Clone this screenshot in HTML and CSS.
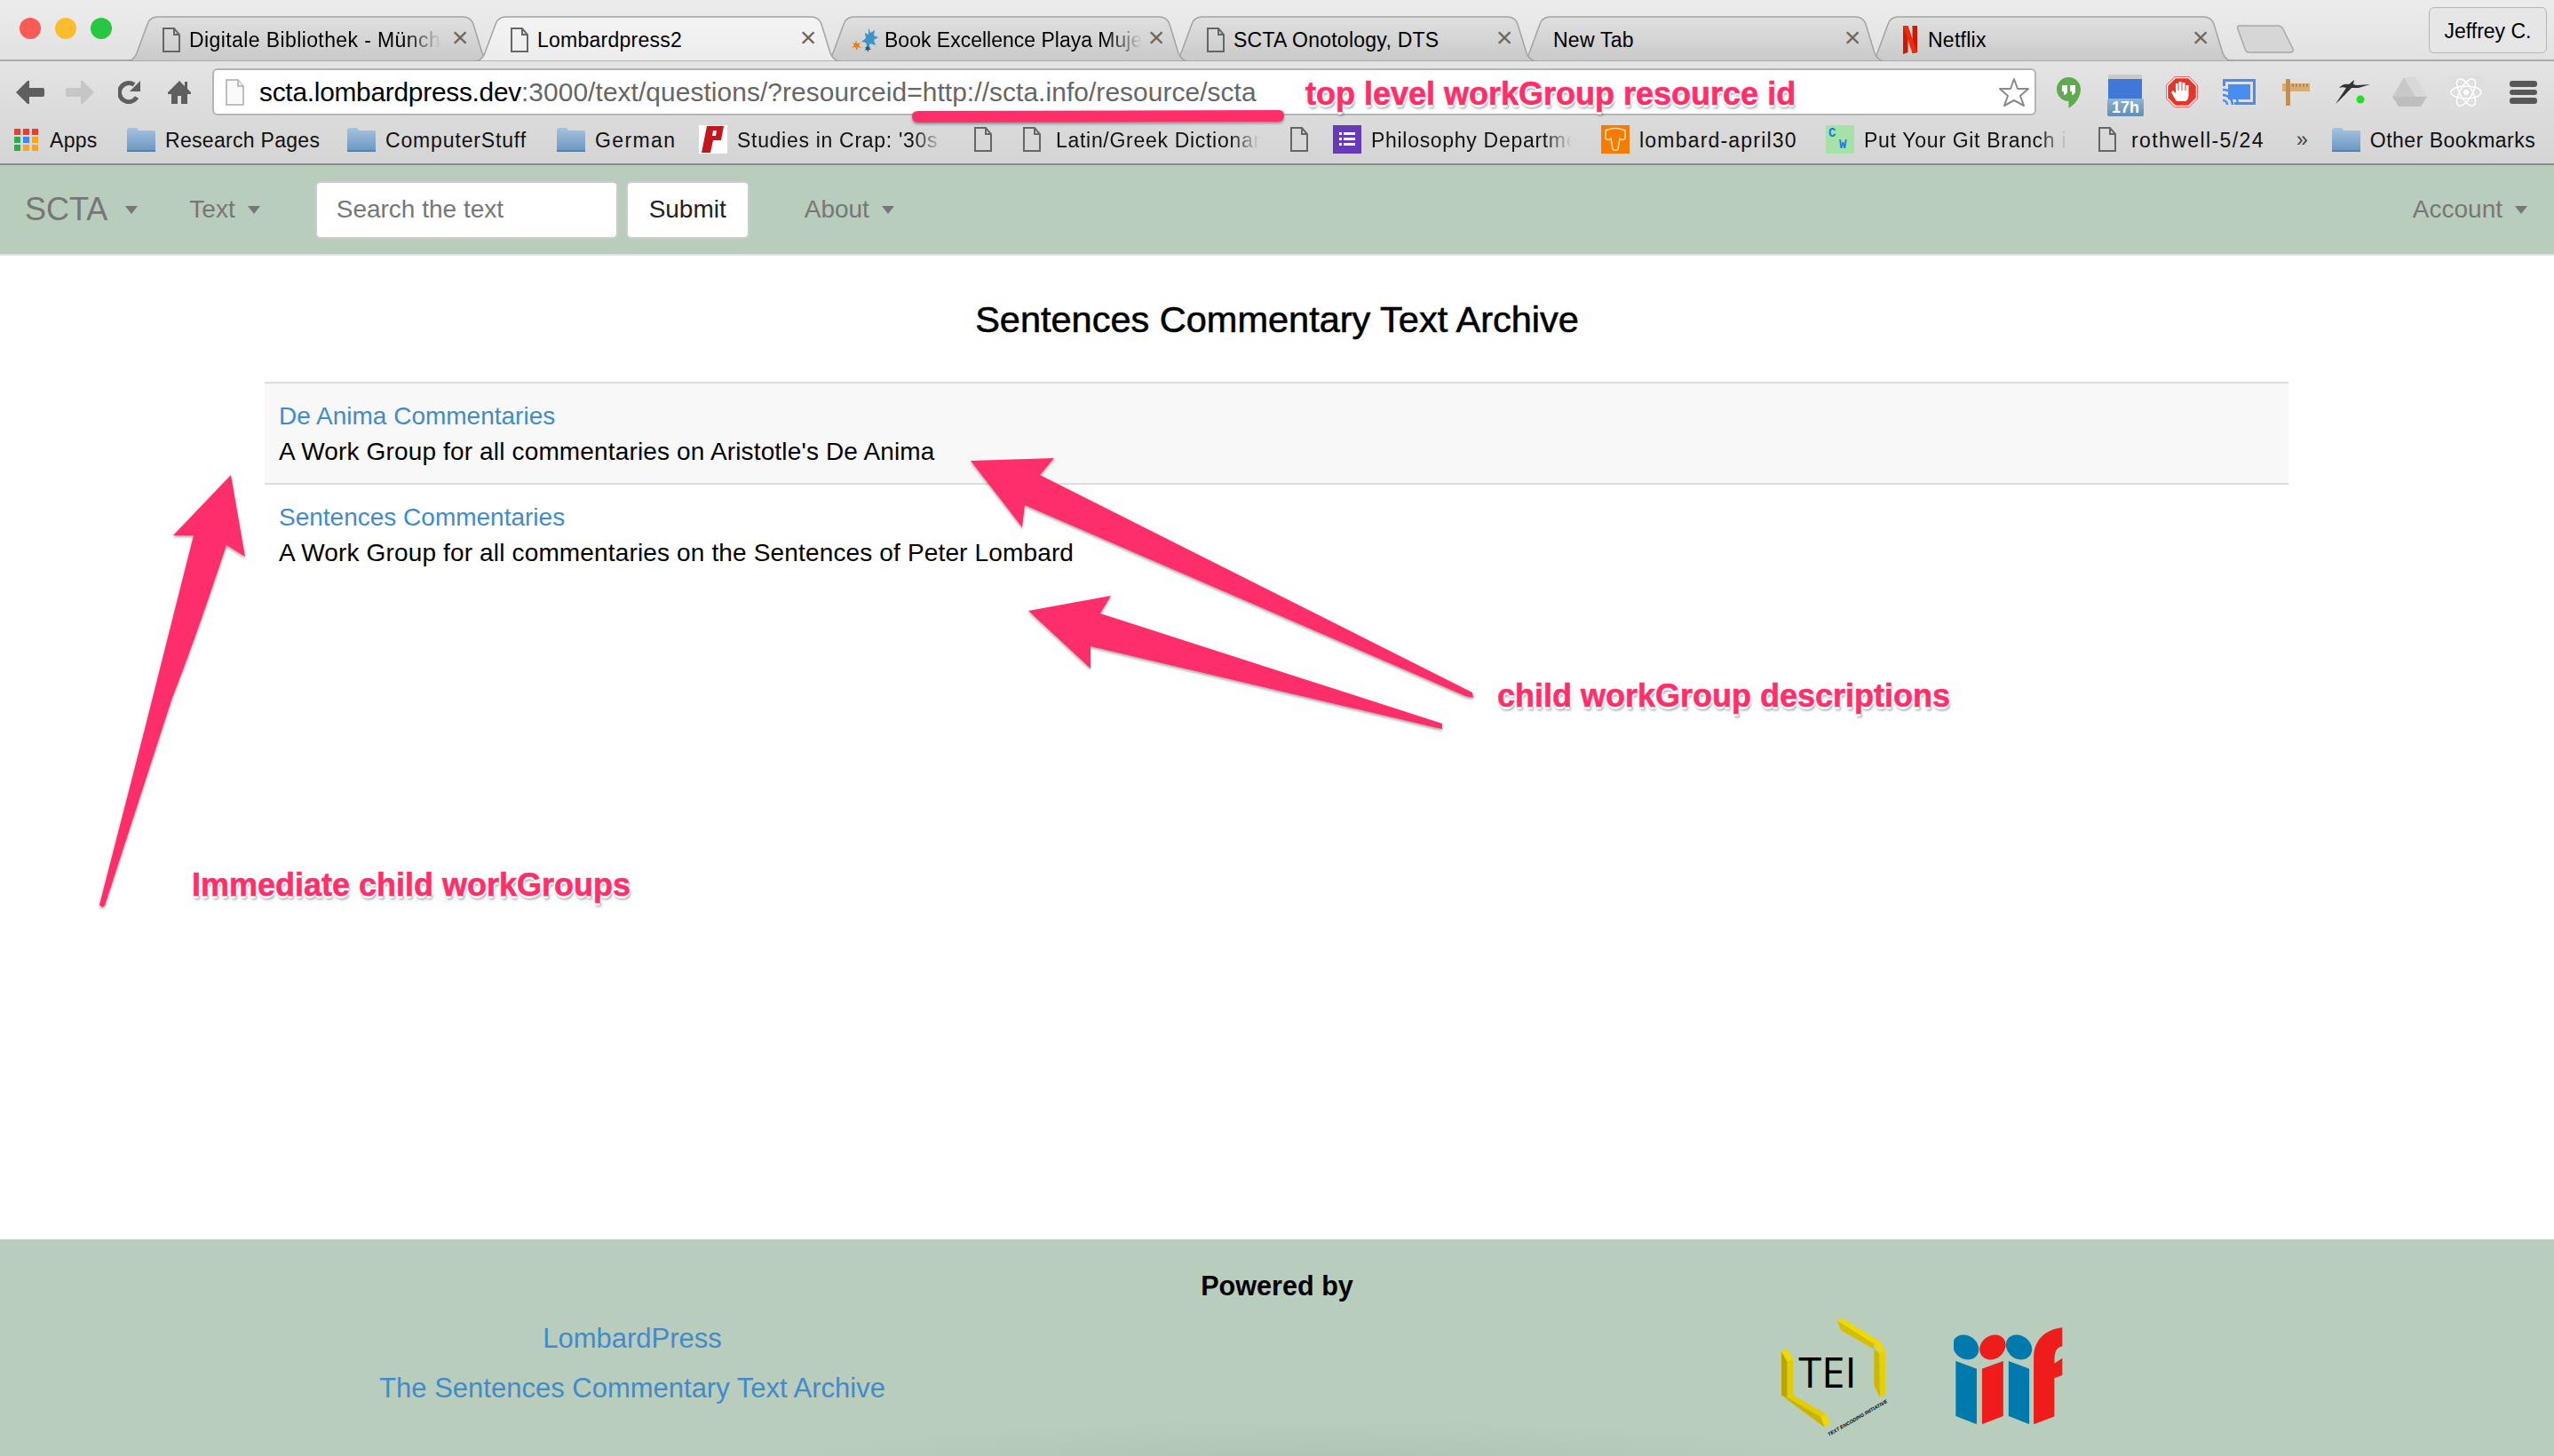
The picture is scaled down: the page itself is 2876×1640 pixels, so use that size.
FILE: index.html
```html
<!DOCTYPE html>
<html lang="en">
<head>
<meta charset="utf-8">
<title>Lombardpress2</title>
<link rel="stylesheet" href="styles.css">
</head>
<body>
<svg class="sprite" width="0" height="0" aria-hidden="true">
  <defs>
    <linearGradient id="gTab" x1="0" y1="0" x2="0" y2="1"><stop offset="0" stop-color="#e0e0e0"/><stop offset="1" stop-color="#c9c9c9"/></linearGradient>
    <linearGradient id="gTabOn" x1="0" y1="0" x2="0" y2="1"><stop offset="0" stop-color="#f4f4f4"/><stop offset="1" stop-color="#ececec"/></linearGradient>
    <linearGradient id="gFolder" x1="0" y1="0" x2="0" y2="1"><stop offset="0" stop-color="#a5c3de"/><stop offset="1" stop-color="#6c97c2"/></linearGradient>
    <linearGradient id="gBadge" x1="0" y1="0" x2="0" y2="1"><stop offset="0" stop-color="#8db4d2"/><stop offset="1" stop-color="#5f8fb5"/></linearGradient>
    <symbol id="tabshape" viewBox="0 0 412 50" preserveAspectRatio="none">
      <path d="M0 50C6 50 9 46 11 41L23 9C25 3 29 1 35 1H378C384 1 388 3 390 9L400 41C402 46 406 50 412 50Z"/>
    </symbol>
    <symbol id="page" viewBox="0 0 20 28">
      <path d="M1 1H13L19 8V27H1Z M13 1V8H19" fill="none" stroke="#666" stroke-width="2"/>
    </symbol>
    <symbol id="folder" viewBox="0 0 32 28">
      <path d="M0 4Q0 1 3 1H10Q12 1 13 4H30Q32 4 32 6V27H0Z" fill="url(#gFolder)"/>
      <path d="M0 26H32V28H0Z" fill="#5f7f9f"/>
    </symbol>
  </defs>
</svg>

<header class="chrome">
  <div class="tabstrip">
    <div class="traffic"><i class="dot dot-red"></i><i class="dot dot-amber"></i><i class="dot dot-green"></i></div>
    <div class="tabs">
      <div class="tab">
        <svg class="tab-bg" fill="url(#gTab)"><use href="#tabshape"/></svg>
        <svg class="fav fav-page"><use href="#page"/></svg>
        <span class="tab-title tab-fade">Digitale Bibliothek - Münch</span>
        <span class="tab-x">×</span>
      </div>
      <div class="tab tab-active">
        <svg class="tab-bg" fill="url(#gTabOn)"><use href="#tabshape"/></svg>
        <svg class="fav fav-page"><use href="#page"/></svg>
        <span class="tab-title">Lombardpress2</span>
        <span class="tab-x">×</span>
      </div>
      <div class="tab">
        <svg class="tab-bg" fill="url(#gTab)"><use href="#tabshape"/></svg>
        <svg class="fav fav-star" viewBox="0 0 30 28">
          <path d="M19 0l2 6 5-3-1 6 5 2-5 3 2 6-6-2-3 6-2-7-5-1 5-4-1-6 4 2z" fill="#3f93c6"/>
          <path d="M5 14l1 4 4-1-2 3 3 3-4-1-1 4-2-4-4 1 3-3-2-3 3 1z" fill="#ea7d1c"/>
          <path d="M18 20l1 2 2-1-1 2 2 2-3 0 0 3-2-3-2 1 1-3-1-1 2 0z" fill="#1d5c8c"/>
        </svg>
        <span class="tab-title tab-fade tab-tight">Book Excellence Playa Muje</span>
        <span class="tab-x">×</span>
      </div>
      <div class="tab">
        <svg class="tab-bg" fill="url(#gTab)"><use href="#tabshape"/></svg>
        <svg class="fav fav-page"><use href="#page"/></svg>
        <span class="tab-title">SCTA Onotology, DTS</span>
        <span class="tab-x">×</span>
      </div>
      <div class="tab tab-plain">
        <svg class="tab-bg" fill="url(#gTab)"><use href="#tabshape"/></svg>
        <span class="tab-title">New Tab</span>
        <span class="tab-x">×</span>
      </div>
      <div class="tab">
        <svg class="tab-bg" fill="url(#gTab)"><use href="#tabshape"/></svg>
        <svg class="fav fav-netflix" viewBox="0 0 16 32">
          <path d="M0 0H5.500V30L0 32ZM10.500 0H16V30L10.500 31Z" fill="#c91c08"/>
          <path d="M0 0H5.500L16 30 10.500 31Z" fill="#ee2a0e"/>
        </svg>
        <span class="tab-title">Netflix</span>
        <span class="tab-x">×</span>
      </div>
    </div>
    <svg class="newtab" viewBox="0 0 64 32"><path d="M2 1H46Q50 1 52 5L63 27Q64 31 60 31H14Q10 31 9 27L1 5Q0 1 2 1Z" fill="#d6d6d6" stroke="#a8a8a8" stroke-width="1.5"/></svg>
    <div class="profile">Jeffrey C.</div>
  </div>

  <div class="toolbar">
    <span class="navbtn"><svg class="nav-ic" viewBox="0 0 32 26"><path d="M0 13L13 0H15V8H30Q32 8 32 10V16Q32 18 30 18H15V26H13Z" fill="#5f5f5f"/></svg></span>
    <span class="navbtn"><svg class="nav-ic" viewBox="0 0 32 26"><path d="M32 13L19 0H17V8H2Q0 8 0 10V16Q0 18 2 18H17V26H19Z" fill="#c6c6c6"/></svg></span>
    <span class="navbtn"><svg class="nav-ic nav-ic-sq" viewBox="0 0 26 26"><path d="M21 18.5A10.5 10.5 0 1 1 18 4.5" fill="none" stroke="#5f5f5f" stroke-width="5"/><path d="M25 0V12H13Z" fill="#5f5f5f"/></svg></span>
    <span class="navbtn"><svg class="nav-ic nav-ic-sq" viewBox="0 0 26 26"><path d="M13 0L19 6V1H22V9L26 13V15H22V26H15V17H11V26H4V15H0V13Z" fill="#5f5f5f"/></svg></span>

    <div class="omnibox">
      <svg class="omni-page" viewBox="0 0 21 30"><path d="M1 1H14L20 8V29H1Z" fill="#fafafa" stroke="#aaa" stroke-width="1.5"/><path d="M14 1V8H20" fill="#eee" stroke="#aaa" stroke-width="1.5"/></svg>
      <span class="url"><b class="url-host">scta.lombardpress.dev</b>:3000/text/questions/?resourceid=http://scta.info/resource/scta</span>
      <svg class="star" viewBox="0 0 36 34"><path d="M18 2L22 13 34 13 25 21 29 32 18 26 7 32 11 21 2 13 14 13Z" fill="#fff" stroke="#8a8a8a" stroke-width="2" stroke-linejoin="round"/></svg>
    </div>

    <div class="extensions">
      <span class="ext"><svg class="e-hang" viewBox="0 0 27 35"><path d="M13.5 0C6 0 0 6 0 13.5S6 27 13.5 27V35C20 31 27 23 27 13.5 27 6 21 0 13.5 0Z" fill="#5fa94e"/><path d="M6 9H12V16Q12 19 8 20V16H6ZM15 9H21V16Q21 19 17 20V16H15Z" fill="#fff"/></svg></span>
      <span class="ext"><svg class="e-cal" viewBox="0 0 41 47"><rect x="1" y="0" width="38" height="6" fill="#c9c9c9"/><rect x="1" y="5" width="38" height="22" fill="#3f78d6"/><rect x="0" y="27" width="41" height="20" rx="2" fill="url(#gBadge)"/><text class="e-cal-t" x="20.5" y="43" text-anchor="middle">17h</text></svg></span>
      <span class="ext"><svg class="e-stop" viewBox="0 0 36 35"><path d="M10 0H26L36 10V25L26 35H10L0 25V10Z" fill="#e5352b"/><path d="M10.500 1.500H25.500L34.500 10.500V24.500L25.500 33.500H10.500L1.500 24.500V10.500Z" fill="none" stroke="#fff" stroke-width="1.500"/><path d="M12 28Q8 22 6 18L8 16 11 19V8H13.500V16H14.500V6H17.500V16H18.500V7H21.500V16H22.500V10H25.500V22Q25 27 22 28Z" fill="#fff"/></svg></span>
      <span class="ext"><svg class="e-cast" viewBox="0 0 37 29"><path d="M0 0H37V29H13V26H34V3H3V8H0Z" fill="#4a8df2"/><rect x="6" y="6" width="25" height="17" fill="#4a8df2"/><path d="M0 12A17 17 0 0 1 17 29M0 18A11 11 0 0 1 11 29M0 24A5 5 0 0 1 5 29" fill="none" stroke="#4a8df2" stroke-width="2.500"/></svg></span>
      <span class="ext"><svg class="e-ruler" viewBox="0 0 31 30"><rect x="0" y="5" width="31" height="9" fill="#d8ae73"/><rect x="4" y="0" width="5" height="30" fill="#c08f55"/><path d="M12 5V9M16 5V9M20 5V9M24 5V9M28 5V9" stroke="#8f6a3a" stroke-width="1"/></svg></span>
      <span class="ext"><svg class="e-dash" viewBox="0 0 39 27"><path d="M0 27L12 9C9 8 7 8 4 9 7 5 11 4 15 5L21 0 20 5 24 6 39 5 26 9 18 9C13 14 9 19 0 27Z" fill="#333"/><circle cx="28" cy="22" r="4.500" fill="#22e022"/></svg></span>
      <span class="ext"><svg class="e-drive" viewBox="0 0 39 33"><path d="M13 0H26L39 22H26Z" fill="#d8d8d8"/><path d="M13 0L26 22 19 33 0 22Z" fill="#c8c8c8"/><path d="M0 22H39L32 33H7Z" fill="#bebebe"/></svg></span>
      <span class="ext"><svg class="e-react" viewBox="0 0 38 38"><rect width="38" height="38" fill="#dedede"/><g fill="none" stroke="#fff" stroke-width="1.500"><ellipse cx="19" cy="19" rx="17" ry="7"/><ellipse cx="19" cy="19" rx="17" ry="7" transform="rotate(60 19 19)"/><ellipse cx="19" cy="19" rx="17" ry="7" transform="rotate(120 19 19)"/></g><circle cx="19" cy="19" r="3" fill="#fff"/></svg></span>
      <span class="ext"><svg class="e-menu" viewBox="0 0 31 26"><rect width="31" height="7" rx="3" fill="#585858"/><rect y="10" width="31" height="6" rx="3" fill="#585858"/><rect y="19" width="31" height="7" rx="3" fill="#585858"/></svg></span>
    </div>
  </div>

  <nav class="bookmarks">
    <a class="bm"><svg class="bm-apps" viewBox="0 0 27 25"><g fill="#ee3b30"><rect width="7" height="7"/><rect x="10" width="7" height="7"/><rect x="20" width="7" height="7"/></g><rect y="9" width="7" height="7" fill="#34a853"/><rect x="10" y="9" width="7" height="7" fill="#4285f4"/><rect x="20" y="9" width="7" height="7" fill="#f5a623"/><rect y="18" width="7" height="7" fill="#34a853"/><rect x="10" y="18" width="7" height="7" fill="#f5a623"/><rect x="20" y="18" width="7" height="7" fill="#f5a623"/></svg><span class="bt bt-apps">Apps</span></a>
    <a class="bm"><svg class="bm-folder"><use href="#folder"/></svg><span class="bt bt-research">Research Pages</span></a>
    <a class="bm"><svg class="bm-folder"><use href="#folder"/></svg><span class="bt bt-computer">ComputerStuff</span></a>
    <a class="bm"><svg class="bm-folder"><use href="#folder"/></svg><span class="bt bt-german">German</span></a>
    <a class="bm"><svg class="bm-square" viewBox="0 0 32 32"><rect width="32" height="32" fill="#fff"/><path d="M9 1H28L25 17H16L13 31H3Z" fill="#c4161c"/><path d="M16 6H20L19 12H15Z" fill="#fff"/></svg><span class="bt fade bt-studies">Studies in Crap: '30s</span></a>
    <a class="bm bm-only"><svg class="bm-page"><use href="#page"/></svg></a>
    <a class="bm"><svg class="bm-page bm-page-text"><use href="#page"/></svg><span class="bt fade bt-latin">Latin/Greek Dictionar</span></a>
    <a class="bm bm-only"><svg class="bm-page"><use href="#page"/></svg></a>
    <a class="bm bm-forms"><svg class="bm-square" viewBox="0 0 32 32"><rect width="32" height="32" fill="#673ab7"/><path d="M7 8H10V11H7ZM12 8H25V11H12ZM7 14H10V17H7ZM12 14H25V17H12ZM7 20H10V23H7ZM12 20H25V23H12Z" fill="#fff"/></svg><span class="bt fade bt-phil">Philosophy Departme</span></a>
    <a class="bm"><svg class="bm-square" viewBox="0 0 32 32"><rect width="32" height="32" fill="#f57c00"/><path d="M5 6Q16 1 27 6V15Q24 18 21 15L19 27Q16 30 13 27L11 15Q8 18 5 15Z" fill="none" stroke="#ffe3bd" stroke-width="1.500"/></svg><span class="bt bt-lombard">lombard-april30</span></a>
    <a class="bm"><svg class="bm-square" viewBox="0 0 32 32"><rect width="32" height="32" fill="#a4e2a8"/><text class="cw-c" x="3" y="13">C</text><text class="cw-w" x="15" y="26">W</text></svg><span class="bt fade bt-git">Put Your Git Branch i</span></a>
    <a class="bm"><svg class="bm-page bm-page-text"><use href="#page"/></svg><span class="bt bt-rothwell">rothwell-5/24</span></a>
    <span class="bm-more">»</span>
    <a class="bm bm-other"><svg class="bm-folder"><use href="#folder"/></svg><span class="bt bt-other">Other Bookmarks</span></a>
  </nav>
</header>

<nav class="navbar">
  <a class="brand">SCTA<i class="caret"></i></a>
  <a class="nav-link nav-text">Text<i class="caret"></i></a>
  <form class="search">
    <input class="search-input" type="text" placeholder="Search the text">
    <button class="search-btn" type="button">Submit</button>
  </form>
  <a class="nav-link nav-about">About<i class="caret"></i></a>
  <a class="nav-link nav-account">Account<i class="caret"></i></a>
</nav>

<main class="content">
  <h1 class="page-title">Sentences Commentary Text Archive</h1>
  <ul class="groups">
    <li class="group group-odd">
      <a class="link">De Anima Commentaries</a>
      <p class="desc">A Work Group for all commentaries on Aristotle's De Anima</p>
    </li>
    <li class="group">
      <a class="link">Sentences Commentaries</a>
      <p class="desc">A Work Group for all commentaries on the Sentences of Peter Lombard</p>
    </li>
  </ul>
</main>

<footer class="footer">
  <h2 class="powered">Powered by</h2>
  <div class="footer-grid">
    <div class="footer-links">
      <a class="link">LombardPress</a>
      <a class="link">The Sentences Commentary Text Archive</a>
    </div>
    <div class="footer-logos">
      <svg class="logo-tei" viewBox="318 135 382 420">
        <path d="M507 145L522 136 652 216 670 248 650 255 632 224Z" fill="#efd900"/>
        <path d="M507 145L632 224 632 242 520 178Z" fill="#d5bd00"/>
        <path d="M632 242L650 255 652 405 632 365Z" fill="#cdb700"/>
        <path d="M650 255L670 248 670 395 652 405Z" fill="#e6d000"/>
        <path d="M318 250L335 238 357 275 338 285Z" fill="#efd900"/>
        <path d="M318 250L338 285 338 405 318 398Z" fill="#b9a600"/>
        <path d="M338 285L357 275 357 397 338 405Z" fill="#e3cd00"/>
        <path d="M338 405L357 397 470 462 452 472Z" fill="#e3cd00"/>
        <path d="M318 398L338 405 452 472 465 507Z" fill="#c9b400"/>
        <path d="M452 472L470 462 483 492 465 507Z" fill="#efd900"/>
        <text class="tei-word" x="376" y="372">TEI</text>
        <text class="tei-sub" transform="translate(479 537) rotate(-30)">TEXT ENCODING INITIATIVE</text>
      </svg>
      <svg class="logo-iiif" viewBox="900 168 370 330">
        <ellipse cx="941" cy="235" rx="47" ry="39" transform="rotate(38 941 235)" fill="#0079ad"/>
        <ellipse cx="1032" cy="235" rx="47" ry="39" transform="rotate(-38 1032 235)" fill="#ef1c1c"/>
        <ellipse cx="1121" cy="235" rx="47" ry="39" transform="rotate(38 1121 235)" fill="#0079ad"/>
        <path d="M907 282L978 308V496L907 468ZM1086 282L1156 308V496L1086 468Z" fill="#0079ad"/>
        <path d="M996 308L1068 282V468L996 496Z" fill="#ef1c1c"/>
        <path d="M1171 496V270C1171 210 1210 175 1268 168V232C1248 235 1241 248 1241 290L1268 272V330L1241 340V470Z" fill="#ef1c1c"/>
      </svg>
    </div>
  </div>
</footer>

<div class="annotations">
  <svg class="anno-art" viewBox="0 0 2876 1640">
    <defs><filter id="arrowShadow" x="-10%" y="-10%" width="120%" height="120%"><feDropShadow dx="0" dy="2" stdDeviation="1.500" flood-color="#000" flood-opacity=".35"/></filter></defs>
    <g fill="#fe2f6b" filter="url(#arrowShadow)">
      <path d="M1027 131Q1027 125 1034 125L1440 124Q1446 124 1446 130 1446 137 1440 137L1034 138Q1027 138 1027 131Z"/>
      <path d="M1093 519L1187 516 1171 535 1658 780 1659 786 1650 784 1154 569 1151 594Z"/>
      <path d="M1158 688L1251 671 1239 691 1624 815 1624 821 1614 819 1228 728 1228 753Z"/>
      <path d="M260 535L276 627 255 614Q220 720 194 786L118 1020Q115 1024 112 1019L163 821 218 603 195 603Z"/>
    </g>
  </svg>
  <span class="anno anno-top">top level workGroup resource id</span>
  <span class="anno anno-desc">child workGroup descriptions</span>
  <span class="anno anno-child">Immediate child workGroups</span>
</div>
</body>
</html>
```
FILE: styles.css
```css
* { box-sizing: border-box; }
html, body { margin: 0; padding: 0; }
body {
  position: relative;
  width: 2876px;
  height: 1640px;
  display: flex;
  flex-direction: column;
  overflow: hidden;
  background: #fff;
  color: #000;
  font-family: "Liberation Sans", Arial, sans-serif;
  font-size: 28px;
  line-height: 40px;
}
.sprite { display: block; height: 0; width: 0; }

/* browser chrome */
.chrome { flex: none; height: 186px; border-bottom: 2px solid #8b8b8b; background: linear-gradient(#ededed, #d4d4d4 100%); font-size: 23px; line-height: 28px; }
.tabstrip { height: 69px; display: flex; align-items: flex-end; border-bottom: 2px solid #ababab; background: linear-gradient(#ececec, #e2e2e2); }
.traffic { width: 143px; height: 69px; flex: none; display: flex; gap: 16px; padding: 22px 0 0 22px; }
.dot { width: 24px; height: 24px; border-radius: 50%; }
.dot-red { background: #fb5a55; }
.dot-amber { background: #fdbb2e; }
.dot-green { background: #27c83f; }
.tabs { display: flex; height: 51px; margin-bottom: -2px; }
.tab { position: relative; width: 412px; height: 51px; margin-right: -20px; display: flex; align-items: center; padding: 2px 0 0 40px; stroke: #a3a3a3; }
.tab:nth-child(1) { z-index: 6; }
.tab:nth-child(2) { z-index: 7; }
.tab:nth-child(3) { z-index: 5; }
.tab:nth-child(4) { z-index: 4; }
.tab:nth-child(5) { z-index: 3; }
.tab:nth-child(6) { z-index: 2; }
.tab-bg { position: absolute; left: 0; top: 0; width: 100%; height: 100%; stroke-width: 1.500; }
.tab-plain { padding-left: 38px; }
.fav { position: relative; flex: none; stroke: none; }
.fav-page { width: 20px; height: 28px; margin-right: 10px; }
.fav-star { width: 30px; height: 28px; margin-left: -8px; margin-right: 7px; }
.fav-netflix { width: 16px; height: 32px; margin-left: 0; margin-right: 12px; }
.tab-title { position: relative; flex: none; white-space: nowrap; stroke: none; letter-spacing: .25px; }
.tab-fade { letter-spacing: .4px; -webkit-mask-image: linear-gradient(90deg, #000 86%, transparent 100%); mask-image: linear-gradient(90deg, #000 86%, transparent 100%); }
.tab-tight { letter-spacing: 0; }
.tab-x { position: absolute; left: 365px; top: 10px; width: 20px; text-align: center; color: #666; font-size: 32px; line-height: 28px; stroke: none; }
.newtab { width: 64px; height: 32px; flex: none; align-self: flex-start; margin: 28px 0 0 24px; }
.profile { margin: 8px 8px auto auto; height: 52px; width: 133px; border: 1.500px solid #b5b5b5; border-radius: 6px; display: flex; align-items: center; justify-content: center; flex: none; background: #e6e6e6; padding-top: 2px; }

.toolbar { height: 61px; display: flex; align-items: flex-start; padding: 8px 0 0 6px; }
.navbtn { width: 56px; height: 53px; flex: none; display: flex; align-items: center; justify-content: center; }
.nav-ic { width: 32px; height: 26px; }
.nav-ic-sq { width: 26px; }
.omnibox { margin-left: 9px; width: 2054px; height: 53px; flex: none; background: #fff; border: 2px solid #b4b4b4; border-radius: 6px; display: flex; align-items: center; padding: 0 5px 0 13px; }
.omni-page { width: 21px; height: 30px; flex: none; margin-right: 17px; }
.url { color: #666; font-size: 29.850px; letter-spacing: .09px; white-space: nowrap; flex: 1; }
.url-host { color: #000; font-weight: 400; letter-spacing: -.25px; }
.star { width: 36px; height: 34px; flex: none; }
.extensions { display: flex; margin-left: 4px; height: 53px; }
.ext { width: 64px; height: 53px; flex: none; display: flex; align-items: center; justify-content: center; }
.e-hang { width: 27px; height: 35px; margin-top: 2px; }
.e-cal { width: 41px; height: 47px; margin-top: 7px; }
.e-cal-t { fill: #fff; font: 700 18px "Liberation Sans", sans-serif; }
.e-stop { width: 36px; height: 35px; }
.e-cast { width: 37px; height: 29px; }
.e-ruler { width: 31px; height: 30px; }
.e-dash { width: 39px; height: 27px; }
.e-drive { width: 39px; height: 33px; }
.e-react { width: 38px; height: 38px; }
.e-menu { width: 31px; height: 26px; }

.bookmarks { height: 54px; display: flex; align-items: center; gap: 33px; padding-left: 16px; white-space: nowrap; color: #111; }
.bm { display: flex; align-items: center; flex: none; }
.bt { display: block; flex: none; padding-top: 2px; letter-spacing: .7px; }
.bt-apps { width: 54px; letter-spacing: .3px; }
.bt-research { width: 172px; letter-spacing: .3px; }
.bt-computer { width: 160px; letter-spacing: .85px; }
.bt-german { width: 84px; letter-spacing: 1.4px; }
.bt-studies { width: 232px; }
.bt-latin { width: 229px; }
.bt-phil { width: 226px; }
.bt-lombard { width: 177px; letter-spacing: 1.2px; }
.bt-git { width: 229px; }
.bt-rothwell { width: 147px; letter-spacing: 1.4px; }
.bt-other { width: 187px; letter-spacing: .5px; }
.bm-apps { width: 27px; height: 25px; margin-right: 13px; }
.bm-folder { width: 32px; height: 28px; margin-right: 11px; }
.bm-square { width: 32px; height: 32px; margin-right: 11px; }
.bm-page { width: 20px; height: 28px; margin-left: 2px; }
.bm-page-text { margin-right: 17px; }
.bm-forms { margin-left: -5px; }
.fade { -webkit-mask-image: linear-gradient(90deg, #000 86%, transparent 100%); mask-image: linear-gradient(90deg, #000 86%, transparent 100%); }
.cw-c, .cw-w { fill: #1479e8; font: 700 14px "Liberation Mono", monospace; }
.bm-more { color: #444; margin-left: 6px; }
.bm-other { margin-left: -6px; }

/* site navbar */
.navbar { flex: none; height: 102px; display: flex; align-items: center; background: #b9cdbd; border-bottom: 2px solid #e2e2e2; color: #777; padding: 0 30px 0 28px; }
.brand { font-size: 36px; display: flex; align-items: center; }
.caret { display: inline-block; width: 0; height: 0; margin-left: 14px; border-top: 9px solid #777; border-left: 7px solid transparent; border-right: 7px solid transparent; }
.brand .caret { margin-left: 20px; }
.nav-link { display: flex; align-items: center; }
.nav-text { margin-left: 58px; }
.search { display: flex; gap: 9px; margin-left: 62px; }
.search-input { width: 341px; height: 65px; background: #fff; border: 2px solid #ccc; border-radius: 6px; padding: 0 22px; font: 28px "Liberation Sans", Arial, sans-serif; color: #555; }
.search-input::placeholder { color: #777; opacity: 1; }
.search-btn { width: 139px; height: 65px; background: #fff; border: 2px solid #ccc; border-radius: 6px; font: 28px "Liberation Sans", Arial, sans-serif; color: #222; padding: 0; }
.nav-about { margin-left: 62px; }
.nav-account { margin-left: auto; }

/* content */
.content { flex: 1; min-height: 0; }
.page-title { margin: 0; padding-top: 48px; height: 142px; text-align: center; font-size: 41.500px; line-height: 48px; font-weight: 400; -webkit-text-stroke: .6px #000; }
.groups { list-style: none; margin: 0 299px 0 298px; padding: 0; }
.group { border-top: 2px solid #ddd; padding: 17px 16px 0; height: 114px; }
.group-odd { background: #f8f8f8; }
.link { color: #428bca; display: block; }
.desc { margin: 0; letter-spacing: .15px; }

/* footer */
.footer { flex: none; height: 244px; background: radial-gradient(ellipse 620px 60px at 1480px 262px, #aec2b2, #b9cdbd 100%) #b9cdbd; padding-top: 32px; }
.powered { margin: 0; text-align: center; font-size: 30.600px; line-height: 40px; font-weight: 700; }
.footer-grid { display: grid; grid-template-columns: 1424px 1fr; }
.footer-links { text-align: center; font-size: 31px; padding-top: 20px; display: flex; flex-direction: column; gap: 16px; }
.footer-logos { display: flex; align-items: flex-start; padding-left: 582px; gap: 67px; margin-top: 1px; height: 150px; }
.logo-tei { width: 127px; height: 140px; flex: none; margin-top: 15px; }
.tei-word { font: 400 142px "Open Sans", "Liberation Sans", sans-serif; fill: #000; }
.tei-sub { font: italic 700 17px "Liberation Sans", sans-serif; fill: #000; }
.logo-iiif { width: 123px; height: 110px; flex: none; margin-top: 26px; }

/* annotations drawn on the screenshot */
.annotations { position: absolute; left: 0; top: 0; width: 2876px; height: 1640px; pointer-events: none; z-index: 20; }
.anno-art { position: absolute; left: 0; top: 0; width: 2876px; height: 1640px; }
.anno { position: absolute; white-space: nowrap; color: #fe2f6b; font-weight: 700; font-size: 36px; line-height: 48px; -webkit-text-stroke: .6px #fe2f6b; text-shadow: 0 0 2px #fff, 2px 0 1px #fff, -2px 0 1px #fff, 0 -2px 1px #fff, 0 3px 1px #fff, 1px 4px 3px rgba(0,0,0,.45); }
.anno-top { left: 1470px; top: 82px; }
.anno-desc { left: 1686px; top: 760px; }
.anno-child { left: 216px; top: 973px; }
```
